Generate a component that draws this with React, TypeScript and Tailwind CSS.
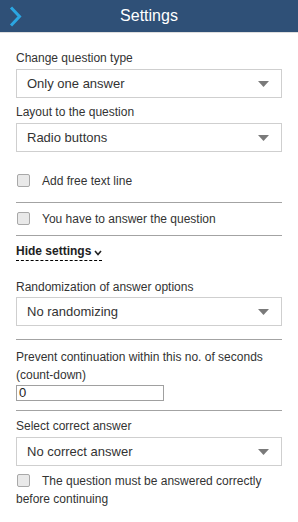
import React from "react";

const font = { fontFamily: '"Liberation Sans", Arial, sans-serif' };

function Select({ value, className = "" }: { value: string; className?: string }) {
  return (
    <div
      className={`flex h-[29px] w-full items-center justify-between border border-[#cfcfcf] bg-white pl-[10px] pr-[12px] text-[13px] text-[#333] ${className}`}
    >
      <span>{value}</span>
      <svg width="11" height="6" viewBox="0 0 11 6">
        <polygon points="0,0 11,0 5.5,6" fill="#7a7a7a" />
      </svg>
    </div>
  );
}

function Box() {
  return (
    <span className="mr-[12px] ml-[1px] inline-block h-[13px] w-[13px] translate-y-[2px] rounded-[2px] border border-[#a8a8a8] bg-[#e9e9e9] align-baseline" />
  );
}

function Hr({ className = "" }: { className?: string }) {
  return <div className={`h-0 w-full border-t border-[#a3a3a3] ${className}`} />;
}

export default function App() {
  return (
    <div className="h-[522px] w-[298px] bg-white text-[#333]" style={font}>
      <div className="grid h-8 grid-cols-[40px_1fr_40px] items-center bg-[#2f5077]">
        <div className="flex items-center pl-[9px]">
          <svg width="13" height="21" viewBox="0 0 13 21">
            <polyline
              points="2,1.5 10.5,10.5 2,19.5"
              fill="none"
              stroke="#2ba6e2"
              strokeWidth="3"
            />
          </svg>
        </div>
        <div className="text-center text-[16px] text-white">Settings</div>
        <div />
      </div>
      <div className="h-px bg-[#dedede]" />

      <div className="px-4 text-[12px] leading-[18px]">
        <div className="mt-[16px]">Change question type</div>
        <Select className="mt-[2px]" value="Only one answer" />

        <div className="mt-[5px]">Layout to the question</div>
        <Select className="mt-[2px]" value="Radio buttons" />

        <div className="mt-[20px] h-[18px]">
          <Box />
          Add free text line
        </div>
        <Hr className="mt-[12px]" />

        <div className="mt-[7px] h-[18px]">
          <Box />
          You have to answer the question
        </div>
        <Hr className="mt-[7px]" />

        <div className="mt-[7px] flex">
          <div className="flex items-center gap-[3px] border-b border-dashed border-black leading-[17px] font-bold text-[#222]">
            Hide settings
            <svg width="8" height="6" viewBox="0 0 8 6" className="mt-[3px]">
              <polyline points="1,1 4,4.5 7,1" fill="none" stroke="#222" strokeWidth="1.6" />
            </svg>
          </div>
        </div>

        <div className="mt-[17px]">Randomization of answer options</div>
        <Select className="mt-[1px]" value="No randomizing" />
        <Hr className="mt-[13px]" />

        <div className="mt-[8px]">
          Prevent continuation within this no. of seconds (count-down)
        </div>
        <div className="mt-[1px] flex h-[16px] w-[148px] items-center border border-[#a0a0a0] pl-[2px] text-[13px] text-[#222]">
          0
        </div>
        <Hr className="mt-[9px]" />

        <div className="mt-[6px]">Select correct answer</div>
        <Select className="mt-[2px]" value="No correct answer" />

        <div className="mt-[6px]">
          <Box />
          The question must be answered correctly before continuing
        </div>
      </div>
    </div>
  );
}
